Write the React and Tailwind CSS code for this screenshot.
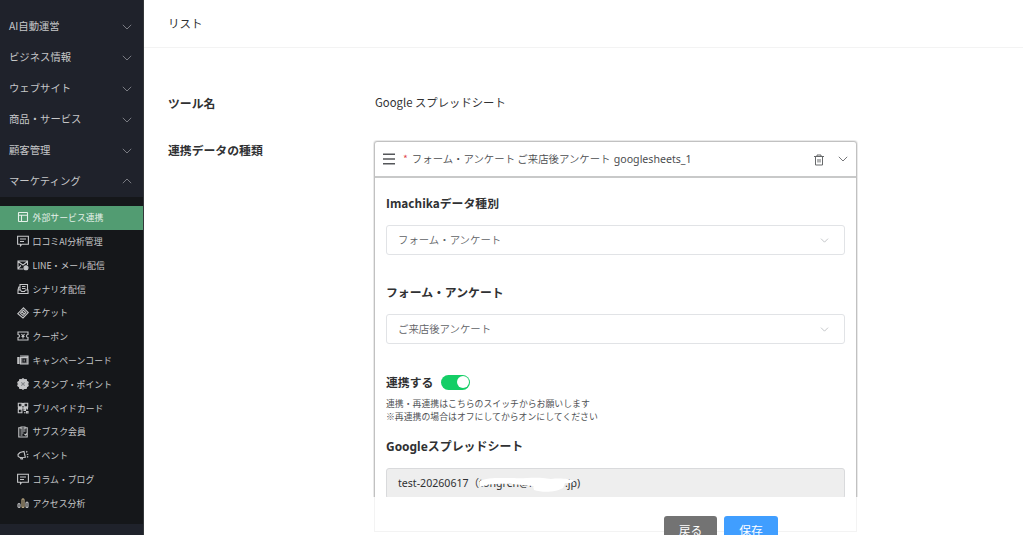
import React from 'react';

const groups = ['AI自動運営', 'ビジネス情報', 'ウェブサイト', '商品・サービス', '顧客管理', 'マーケティング'];

const bubble = (
  <>
    <path d="M.6 1.200h10.800v8H5L3.500 10.800V9.200H.6z" />
    <path d="M3 4h6M3 6.500h4" />
  </>
);

const items = [
  ['外部サービス連携', <><rect x="1.500" y="1.500" width="9" height="9" rx=".5" /><path d="M1.500 4.300h9M4.500 4.300v6.200" /></>],
  ['口コミAI分析管理', bubble],
  ['LINE・メール配信', <><path d="M10.500 6V2H1v8h5.500M1 2.500l5 3.500 4.500-3.500M1 9.500l3-3" /><circle cx="9" cy="8.800" r="2" fill="currentColor" /></>],
  ['シナリオ配信', <><path d="M3 7V1.500h7.500V7M3 4H1.800L1 7v3.500h10V7H8.500l-1 1.500h-3L3.500 7H1M5 3.500h3.500M5 5.500h3.500" /></>],
  ['チケット', <><path d="M6.500.8 11.300 5.500 6 11 .8 6.600z" /><path d="M6.300 3.200 8.800 5.600 6 8.500 3.400 6.300zM5 5l2.500 2" /></>],
  ['クーポン', <><path d="M1 2h10v2.500a1.400 1.400 0 0 0 0 3V10H1V7.500a1.400 1.400 0 0 0 0-3z" /><path d="m4.500 4 1.500 2 1.500-2M6 6v2.500M4.500 6.500h3" /></>],
  ['キャンペーンコード', <><path d="M.8 3.500H2V9.500H.8zM3.500 3.500h7.500v6.500H3.500zM3 2h8v1.500" fill="currentColor" fillOpacity=".55" /><path d="M6 5h2.500v3H6z" stroke="#17191d" /></>],
  ['スタンプ・ポイント', <><path d="m6 .7 1.400 1.100 1.800-.2.500 1.700 1.500 1L10.700 6l.5 1.700-1.500 1-.5 1.700-1.800-.2L6 11.300l-1.400-1.100-1.800.2-.5-1.700-1.500-1L1.300 6l-.5-1.700 1.500-1 .5-1.700 1.800.2z" fill="currentColor" stroke="currentColor" /><path d="m4.300 4.300 3.400 3.400M7.700 4.300 4.300 7.700" stroke="#85888c" /></>],
  ['プリペイドカード', <><path d="M1.300 1.300h3.600v3.600H1.300zM7.100 1.300h3.600v3.600H7.100zM1.300 7.100h3.600v3.600H1.300zM7 7h1.500v1.500H7zM9.500 9.500h1.500V11H9.500zM9.500 7h1.500M7 10.700h1.500M3 3h.3M8.800 3h.3M3 9h.3M6 1v3M1 6h10" /></>],
  ['サブスク会員', <><path d="M4 1.800H1.800V11h8.400V1.800H8M4 1h4v2H4zM3.500 5h5M3.500 7h3M3.500 9h2M7.500 8l1 1 1.500-1.500" /></>],
  ['イベント', <><path d="M1 5.500 3 3.500l4-1L8.300 8.300 3 8.500 1.200 7.500zM3.500 8.500l.5 1.500h1.500L5.200 8.400M9.500 3.500l.5-1.500M9.800 5.500l1.500-.2M10 7.500l1.200.8" /></>],
  ['コラム・ブログ', bubble],
  ['アクセス分析', <><rect x="1" y="6.500" width="2" height="4" rx="1" /><rect x="5" y="1.800" width="2" height="8.700" rx="1" stroke="#c9b48c" /><rect x="9" y="5" width="2" height="5.500" rx="1" /></>],
];

function Chevron({ up = false, className }) {
  return (
    <svg viewBox="0 0 10 6" className={className} fill="none" stroke="currentColor" strokeWidth="0.9">
      <path d={up ? 'M.8 5.200 5 1l4.200 4.200' : 'M.8.800 5 5 9.200.8'} />
    </svg>
  );
}

function Sidebar() {
  return (
    <aside className="flex h-full w-[144px] shrink-0 flex-col border-r border-[#34373a] bg-[#1f222b] pt-[11px] text-[#c6c7c9]">
      {groups.map((g, i) => (
        <div key={g} className="flex h-[30.9px] shrink-0 items-center justify-between pr-[11px] pl-[9px] text-[10.35px]">
          <span className="-mt-[0.5px]">{g}</span>
          <Chevron up={i === 5} className="mt-px h-[6px] w-[10px] text-[#83868c]" />
        </div>
      ))}
      <nav className="mt-[0.6px] flex h-[327px] shrink-0 flex-col bg-[#15171a] pt-[9px]">
        {items.map(([label, icon], i) => (
          <div
            key={label}
            className={`flex h-[23.8px] shrink-0 items-center gap-[4px] pl-[16.600px] text-[8.87px] ${i === 0 ? 'bg-[#529c72] text-[#e4f0e8]' : ''}`}
          >
            <svg viewBox="0 0 12 12" className="-mt-px size-[12px] shrink-0" fill="none" stroke="currentColor" strokeWidth="1.1">
              {icon}
            </svg>
            <span className="whitespace-nowrap">{label}</span>
          </div>
        ))}
      </nav>
    </aside>
  );
}

function Select({ children }) {
  return (
    <div className="flex h-[30px] items-center justify-between rounded-[3px] border border-[#e1e3e6] pr-[15px] pl-[11px] text-[10.4px] font-[350] text-[#606266]">
      <span>{children}</span>
      <Chevron className="h-[5px] w-[9px] text-[#b0b2b7]" />
    </div>
  );
}

function Heading({ children }) {
  return <h3 className="h-[18px] text-[11.85px] leading-[18px] font-bold text-[#303133]">{children}</h3>;
}

function Panel() {
  return (
    <div className="h-[357px] overflow-hidden px-[2px] pt-[2px]">
      <section className="h-[380px] rounded-t-[2px] bg-white shadow-[0_0_2px_1px_rgba(0,0,0,0.33)]">
        <header className="flex h-[36px] items-center border-b-2 border-[#c8c9c9] pr-[8px] pl-[8px] text-[10.4px] font-[350] text-[#4b4d50]">
          <svg viewBox="0 0 12 12" className="mr-[8px] size-[12px]" stroke="#55575a" strokeWidth="1.5">
            <path d="M0 1.300h12M0 6h12M0 10.700h12" />
          </svg>
          <span className="mr-[4px] font-normal text-[#e0454d]">*</span>
          <span className="whitespace-nowrap">フォーム・アンケート ご来店後アンケート <span className="ml-px font-['Noto_Sans'] text-[10.6px] font-normal">googlesheets_1</span></span>
          <svg viewBox="0 0 10 12" className="mt-px ml-auto h-[12px] w-[10px]" fill="none" stroke="#66686a" strokeWidth="1">
            <path d="M0 2.500h10M3 2.500V1h4v1.500M1.500 2.500v8.500h7V2.500M4 5v3.500M6 5v3.500" />
          </svg>
          <Chevron className="ml-[14px] h-[6px] w-[10px] text-[#66686b]" />
        </header>
        <div className="flex flex-col px-[11px] pt-[16px]">
          <Heading>Imachikaデータ種別</Heading>
          <div className="mt-[13px]"><Select>フォーム・アンケート</Select></div>
          <div className="mt-[28px]"><Heading>フォーム・アンケート</Heading></div>
          <div className="mt-[13px]"><Select>ご来店後アンケート</Select></div>
          <div className="mt-[29px] flex items-center gap-[8px]">
            <Heading>連携する</Heading>
            <span className="flex h-[15px] w-[29px] items-center justify-end rounded-full bg-[#14ce66] pr-px">
              <span className="size-[12px] rounded-full bg-white" />
            </span>
          </div>
          <p className="mt-[6px] text-[8.87px] leading-[13px] text-[#505255]">
            連携・再連携はこちらのスイッチからお願いします<br />
            ※再連携の場合はオフにしてからオンにしてください
          </p>
          <div className="mt-[14px]"><Heading><span className="font-['Noto_Sans','Noto_Sans_CJK_JP',sans-serif] text-[11.95px]">Googleスプレッドシート</span></Heading></div>
          <div className="relative mt-[13px] flex h-[31px] items-center rounded-[3px] border border-[#d9dadc] bg-[#eeeeee] pl-[11px] font-['Noto_Sans','Noto_Sans_CJK_JP',sans-serif] text-[10.6px] text-[#303133]">
            <span className="whitespace-nowrap">test-20260617（tongren@fu</span>
            <span className="ml-[26px]">.jp)</span>
            <svg viewBox="0 0 110 24" className="absolute top-[3px] left-[90px] h-[24px] w-[110px]" fill="white">
              <path d="M3 9 C10 5 25 6 37 6 C48 7 58 4 74 7 C84 6 93 7 97 9 L94 11 L88 11 L86 16 C80 20 66 21 57 18 L56 14 L40 12.500 C25 11 12 12 8 13.500 L3 15Z" />
            </svg>
          </div>
        </div>
      </section>
    </div>
  );
}

export default function App() {
  return (
    <div className="flex h-[535px] w-[1023px] overflow-hidden bg-white font-['Noto_Sans_CJK_JP',sans-serif] text-[#303133]">
      <Sidebar />
      <main className="flex min-w-0 flex-1 flex-col">
        <div className="flex h-[48px] shrink-0 items-center border-b border-[#f3f3f3] pl-[24px] text-[11.5px]">リスト</div>
        <div className="mt-[45px] flex h-[18px] shrink-0 items-center pl-[24px]">
          <div className="w-[207px] pt-[2px] text-[11.85px] leading-[18px] font-bold">ツール名</div>
          <div className="text-[11.35px] leading-[18px]">Google スプレッドシート</div>
        </div>
        <div className="mt-[29px] flex shrink-0 pl-[24px]">
          <div className="w-[205px] pt-px text-[11.85px] leading-[18px] font-bold">連携データの種類</div>
          <div className="h-[394px] w-[485px]">
            <Panel />
            <div className="mx-px flex h-[35px] items-start justify-end gap-[7px] border-x border-b border-[#f3f3f3] pt-[19px] pr-[78px] text-[11.800px] text-white">
              <button className="h-[27px] w-[53px] shrink-0 rounded-[3px] bg-[#737373]">戻る</button>
              <button className="h-[27px] w-[54px] shrink-0 rounded-[3px] bg-[#409eff]">保存</button>
            </div>
          </div>
        </div>
      </main>
    </div>
  );
}
